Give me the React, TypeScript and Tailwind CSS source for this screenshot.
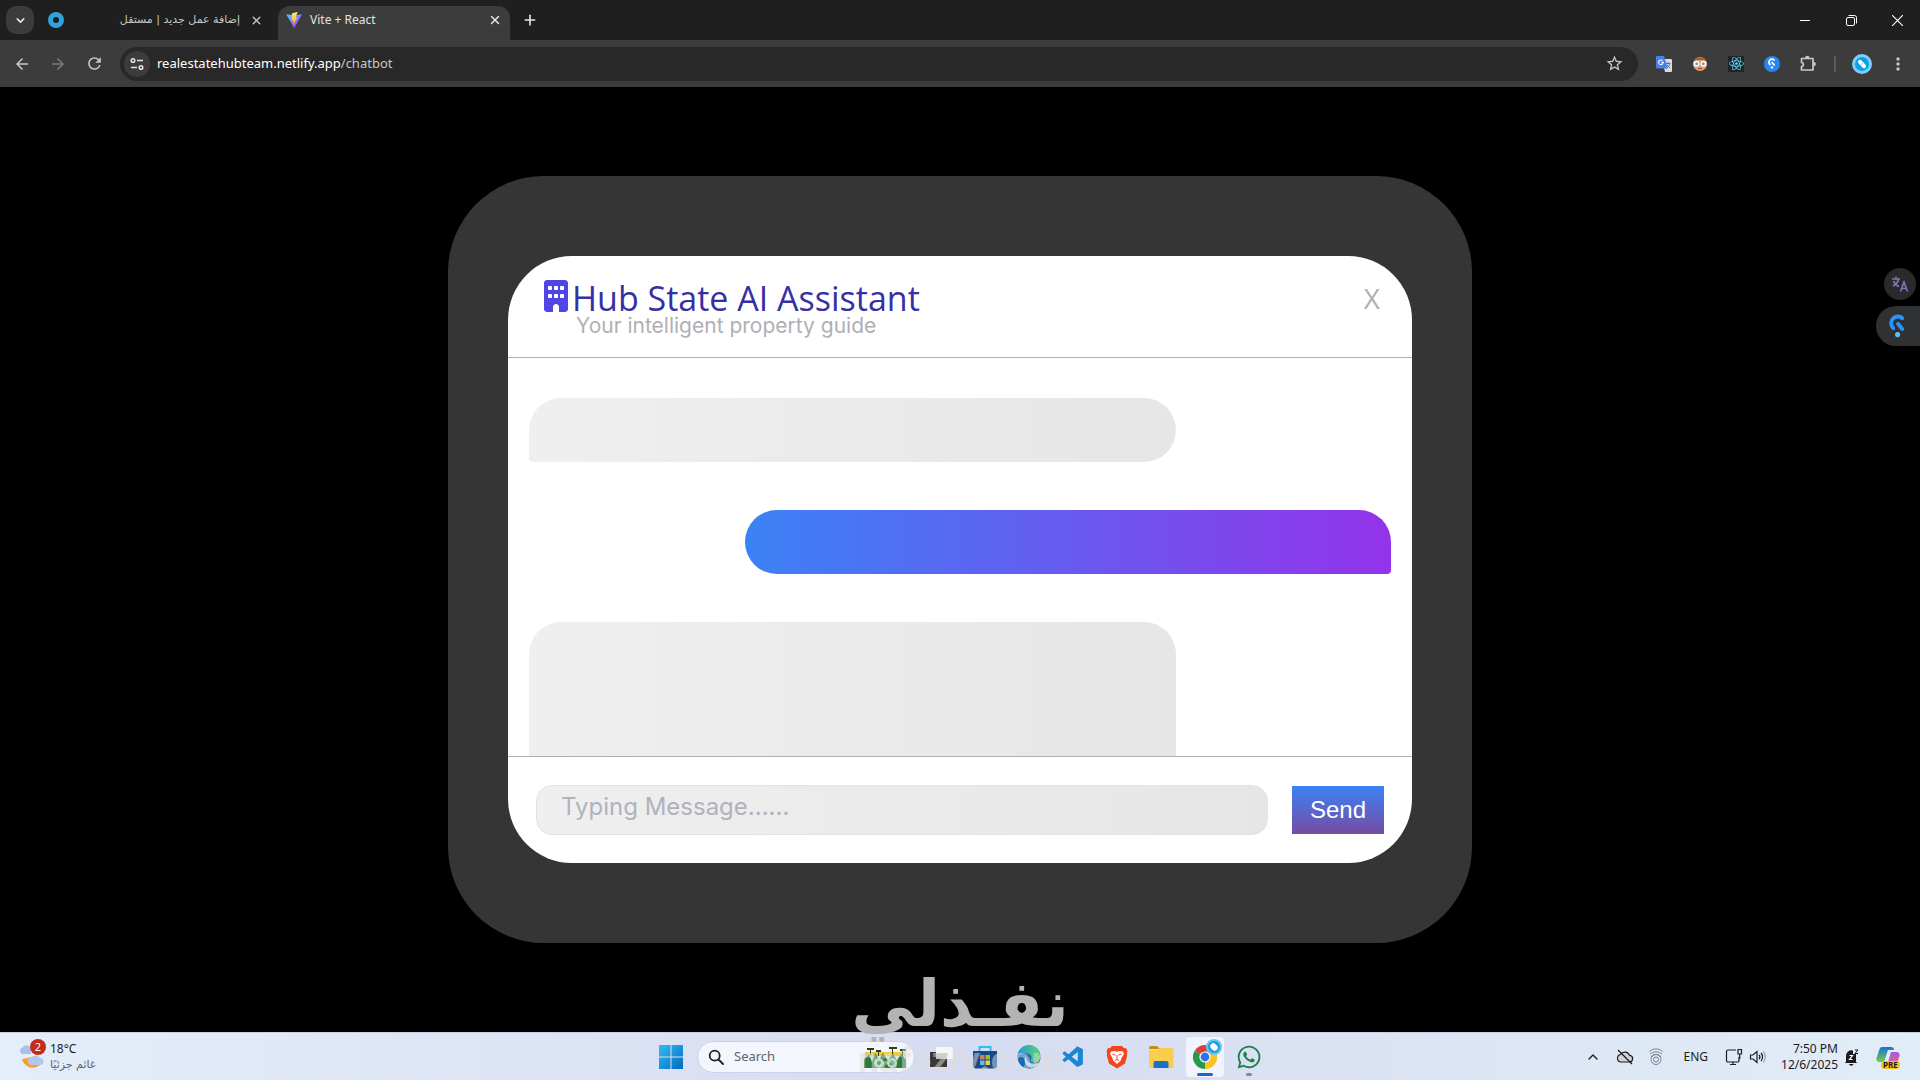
import type { ReactNode } from "react";
import { FaBuilding } from "react-icons/fa6";
import { FaWhatsapp, FaReact } from "react-icons/fa";
import { VscVscode } from "react-icons/vsc";
import { MdTranslate, MdStarBorder, MdRefresh, MdArrowBack, MdArrowForward, MdMoreVert } from "react-icons/md";
import { ChevronDown, ChevronUp, Plus, X } from "lucide-react";

const UI = "font-['Noto_Sans','Open_Sans','DejaVu_Sans',sans-serif]";

function ViteLogo() {
  return (
    <svg viewBox="0 0 32 32" className="size-4 shrink-0" aria-hidden="true">
      <defs>
        <linearGradient id="viteA" x1="0" y1="0" x2="0.7" y2="1">
          <stop offset="0" stopColor="#41d1ff" />
          <stop offset="1" stopColor="#bd34fe" />
        </linearGradient>
        <linearGradient id="viteB" x1="0.5" y1="0" x2="0.5" y2="1">
          <stop offset="0" stopColor="#ffea83" />
          <stop offset="1" stopColor="#ffa800" />
        </linearGradient>
      </defs>
      <path d="M31.3 5.6 17 31a.8.8 0 0 1-1.4 0L.9 5.6A.8.8 0 0 1 1.700 4.500L16 7 30.500 4.500a.8.8 0 0 1 .8 1.100z" fill="url(#viteA)" />
      <path d="M22.700.2 12.200 2.300l-.4.400-.7 14 .5.400 3-.7-1 4.500 2.300-.4-1.200 5.500 7.700-14.700-3.400.4L23 .8z" fill="url(#viteB)" />
    </svg>
  );
}

function Tabs() {
  return (
    <header className="flex h-10 bg-[#1f1f1f] text-[#e3e3e3]">
      <div className="flex w-[278px] items-center pl-1.5">
        <button aria-label="Search tabs" className="flex size-7 items-center justify-center rounded-[10px] bg-[#3c3c3c]">
          <ChevronDown size={13} strokeWidth={3} />
        </button>
        <span className="ml-3.5 size-4 shrink-0 rounded-full border-[5px] border-[#2ea3dc]" />
        <span dir="rtl" className="ml-auto whitespace-nowrap text-[11px] text-[#c7c7c7] font-['DejaVu_Sans',sans-serif]">إضافة عمل جديد | مستقل</span>
        <button aria-label="Close tab" className="mr-[15px] ml-2.5 text-[#c7c7c7]"><X size={13} strokeWidth={2.500} /></button>
      </div>
      <div className="flex h-[34px] w-[232px] items-center self-end rounded-t-xl bg-[#3c3c3c] px-2 pb-1.5">
        <ViteLogo />
        <span className="ml-2 text-xs">Vite + React</span>
        <button aria-label="Close tab" className="ml-auto"><X size={14} strokeWidth={2.500} /></button>
      </div>
      <button aria-label="New tab" className="ml-2.5 px-0.5"><Plus size={16} strokeWidth={2.500} /></button>
      <div className="ml-auto flex text-white">
        <button aria-label="Minimize" className="flex w-[46px] items-center justify-center">
          <svg viewBox="0 0 10 10" className="size-2.5" stroke="currentColor"><path d="M0 5.500h10" /></svg>
        </button>
        <button aria-label="Restore" className="flex w-[46px] items-center justify-center">
          <svg viewBox="0 0 11 11" className="size-[11px]" fill="none" stroke="currentColor"><rect x=".5" y="2.500" width="8" height="8" rx="1.500" /><path d="M2.500.5h6a2 2 0 0 1 2 2v6" /></svg>
        </button>
        <button aria-label="Close" className="flex w-[46px] items-center justify-center">
          <svg viewBox="0 0 10 10" className="size-[11px]" stroke="currentColor"><path d="M0 0l10 10M10 0L0 10" /></svg>
        </button>
      </div>
    </header>
  );
}

function HubMark({ className, main, dot }: { className: string; main: string; dot: string }) {
  return (
    <svg viewBox="0 0 20 28" className={className} aria-hidden="true" fill="none">
      <path d="M15.500 5A6.800 6.800 0 1 0 5 16.500" stroke={main} strokeWidth="4.500" strokeLinecap="round" />
      <path d="M10.500 11.500 15.500 17.500" stroke={main} strokeWidth="4.500" strokeLinecap="round" />
      <circle cx="10" cy="24" r="3" fill={dot} />
    </svg>
  );
}

function Toolbar() {
  return (
    <nav className="flex h-[47px] items-center bg-[#3c3c3c] text-[#c7c7c7]">
      <button aria-label="Back" className="ml-1 flex w-9 justify-center"><MdArrowBack size={18} /></button>
      <button aria-label="Forward" className="flex w-9 justify-center text-[#7b7b7b]"><MdArrowForward size={18} /></button>
      <button aria-label="Reload" className="flex w-9 justify-center"><MdRefresh size={19} /></button>
      <div className="ml-2 flex h-[34px] flex-1 items-center rounded-full bg-[#282828] pl-1 pr-3.5">
        <button aria-label="Site information" className="flex size-[26px] items-center justify-center rounded-full bg-[#3c3c3c]">
          <svg viewBox="0 0 14 14" className="size-3.5" fill="none" stroke="#e3e3e3" strokeWidth="1.500"><circle cx="3" cy="3.500" r="1.800" /><path d="M7 3.500h6M1 10.500h6" /><circle cx="11" cy="10.500" r="1.800" /></svg>
        </button>
        <div role="textbox" aria-label="Address" contentEditable suppressContentEditableWarning className="ml-[7px] flex-1 text-[13px] text-white outline-none">
          realestatehubteam.netlify.app<span className="text-[#c7c7c7]">/chatbot</span>
        </div>
        <button aria-label="Bookmark"><MdStarBorder size={19} /></button>
      </div>
      <div className="ml-2 flex items-center">
        <button aria-label="Translate" className="flex w-9 justify-center">
          <svg viewBox="0 0 16 16" className="size-4"><path d="M6 3h9a1 1 0 0 1 1 1v11a1 1 0 0 1-1 1H9z" fill="#d9dce0" /><path d="M9.500 7.500h5M12 6v1.500M14 7.500c-.5 2-2 3.500-3.500 4.500M11 9l3 3" stroke="#697077" fill="none" /><path d="M0 1a1 1 0 0 1 1-1h7l4 12.500H1a1 1 0 0 1-1-1z" fill="#4a80ee" /><path d="M6.500 4.600A2.300 2.300 0 1 0 7.200 6.300H5" stroke="#fff" fill="none" strokeWidth="1.100" /></svg>
        </button>
        <button aria-label="Face extension" className="flex w-9 justify-center">
          <svg viewBox="0 0 16 16" className="size-4"><circle cx="8" cy="8" r="7" fill="#dc9e75" /><path d="M1.500 6C2 0 14 0 14.500 6L12 4H4z" fill="#9b6235" /><circle cx="4.500" cy="7.800" r="3" fill="#fff" /><circle cx="11.500" cy="7.800" r="3" fill="#fff" /><circle cx="4.700" cy="7.800" r="1.500" fill="#7f9aa2" /><circle cx="11.300" cy="7.800" r="1.500" fill="#7f9aa2" /><path d="M6 12.500h4" stroke="#a94732" /></svg>
        </button>
        <button aria-label="React tools" className="flex w-9 justify-center"><span className="flex size-4 items-center justify-center bg-[#20232a] text-[#61dafb]"><FaReact size={15} /></span></button>
        <button aria-label="Hub extension" className="flex w-9 justify-center"><span className="flex size-4 items-center justify-center rounded-full bg-[#2487f5]"><HubMark className="h-[11px]" main="#fff" dot="#fff" /></span></button>
        <button aria-label="Extensions" className="flex w-9 justify-center">
          <svg viewBox="0 0 18 18" className="size-[18px]" fill="none" stroke="#c7c7c7" strokeWidth="1.700" strokeLinejoin="round"><path d="M2.500 3.500h11.500v11.500H2.500v-3.500c2.500 0 2.500-4 0-4z" /><path d="M7 3a1.300 1.300 0 0 1 2.600 0M14.500 7.500a1.500 1.500 0 0 1 0 3" fill="#c7c7c7" /></svg>
        </button>
        <span className="ml-2 h-4 w-0.5 bg-[#5b5b5b]" />
        <button aria-label="Profile" className="ml-4 flex size-5 items-center justify-center rounded-full bg-[#7fd0f7]">
          <svg viewBox="0 0 16 16" className="size-4"><circle cx="8" cy="8" r="7" fill="#08a2e8" /><path d="M6 5.800 10 10.200" stroke="#fff" strokeWidth="4" strokeLinecap="round" /><path d="M6.500 9.500 9.500 6.500" stroke="#8fd3f7" strokeWidth="1" /></svg>
        </button>
        <button aria-label="Menu" className="ml-4 mr-3"><MdMoreVert size={20} /></button>
      </div>
    </nav>
  );
}

function ChatCard() {
  return (
    <section className="w-full max-w-[1024px] rounded-[96px] bg-[#353535] px-[60px] py-20">
      <div className="flex flex-col overflow-hidden rounded-[64px] bg-white">
        <div className="flex h-[102px] items-start border-b border-[#b0b0b0] px-9 pt-6">
          <FaBuilding className="h-8 w-6 text-[#4f46e5]" />
          <div className="ml-1 pt-0.5">
            <h1 className="text-[34px] leading-8 text-[#3730a3] font-['Open_Sans',sans-serif]">Hub State AI Assistant</h1>
            <p className="ml-1 text-[21px] leading-6 text-[#b0b0b4] font-[Inter,sans-serif]">Your intelligent property guide</p>
          </div>
          <button aria-label="Close chat" className="-mr-1 ml-auto text-[28px] font-medium leading-9 text-[#b0b0b0] font-['Open_Sans',sans-serif]">X</button>
        </div>
        <div className="flex h-[398px] flex-col gap-12 overflow-hidden px-[21px] pt-10">
          <div className="h-16 w-3/4 shrink-0 rounded-[32px] rounded-bl-[4px] bg-linear-to-r/srgb from-[#efefef] to-[#e6e6e6]" />
          <div className="h-16 w-3/4 shrink-0 self-end rounded-[32px] rounded-br-[4px] bg-linear-to-r/srgb from-[#3b82f6] to-[#9333ea]" />
          <div className="h-44 w-3/4 shrink-0 rounded-[32px] rounded-bl-[4px] bg-linear-to-r/srgb from-[#efefef] to-[#e6e6e6]" />
        </div>
        <form className="flex h-[107px] items-center gap-6 border-t border-[#b0b0b0] px-7" onSubmit={(e) => e.preventDefault()}>
          <input aria-label="Message" placeholder="Typing Message......" className="h-[50px] min-w-0 flex-1 rounded-2xl border border-[#e3e3e3] bg-linear-to-r/srgb from-[#efefef] to-[#e6e6e6] px-6 pb-2 text-2xl font-[Inter,sans-serif] placeholder:text-[#b0b2bd]" />
          <button className="h-12 bg-linear-to-b/srgb from-[#3b82f6] to-[#764ba2] px-[18px] text-2xl text-white font-['Liberation_Sans',sans-serif]">Send</button>
        </form>
      </div>
    </section>
  );
}

function TaskButton({ label, children }: { label: string; children: ReactNode }) {
  return <button aria-label={label} className="relative flex h-12 w-11 items-center justify-center">{children}</button>;
}

function ChromeLogo() {
  return (
    <svg viewBox="0 0 24 24" className="size-6" aria-hidden="true">
      <path d="M12 12 1.600 6A12 12 0 0 1 22.400 6z" fill="#de4033" />
      <path d="M12 12 22.400 6A12 12 0 0 1 12 24z" fill="#fcc31e" />
      <path d="M12 12 12 24A12 12 0 0 1 1.600 6z" fill="#26994a" />
      <path d="M12 6.500h10.600A12 12 0 0 1 12 24l4.800-8.800z" fill="#fcc31e" />
      <circle cx="12" cy="12" r="5.600" fill="#fff" />
      <circle cx="12" cy="12" r="4.400" fill="#2f74e6" />
    </svg>
  );
}

function Taskbar() {
  return (
    <footer className="grid h-12 grid-cols-[1fr_auto_1fr] border-t border-[#c9cfdd] bg-linear-to-r from-[#e4eefa] via-[#d6dcf1] to-[#e1edf7] text-xs text-[#1b1b1f]">
      <div className="flex items-center pl-[18px]">
        <div className="relative h-7 w-8">
          <svg viewBox="0 0 32 28" className="h-7 w-8" aria-hidden="true">
            <path d="M4 16a11 11 0 0 0 18 6l-2-9z" fill="#f5a12c" />
            <path d="M4 11a3.500 3.500 0 0 1 .5-6.500A5 5 0 0 1 13 5v6z" fill="#aabfe9" />
            <path d="M14 22a4 4 0 0 1 0-8 5 5 0 0 1 8 1 3.500 3.500 0 0 1 0 7z" fill="#b5c5ec" />
          </svg>
          <span className="absolute -top-1 left-3 flex size-4 items-center justify-center rounded-full bg-[#c42b1c] text-[11px] text-white">2</span>
        </div>
        <div className="leading-4">
          <div>18°C</div>
          <div dir="rtl" className="text-[11px] text-[#5b5f68] font-['DejaVu_Sans',sans-serif]">غائم جزئيًا</div>
        </div>
      </div>

      <div className="flex items-center">
        <TaskButton label="Start">
          <svg viewBox="0 0 24 24" className="size-6">
            <defs><linearGradient id="win" x1="0" y1="0" x2="1" y2="1"><stop offset="0" stopColor="#33bdf2" /><stop offset="1" stopColor="#0568c2" /></linearGradient></defs>
            <path d="M0 0h11.500v11.500H0zM12.500 0H24v11.500H12.500zM0 12.500h11.500V24H0zM12.500 12.500H24V24H12.500z" fill="url(#win)" />
          </svg>
        </TaskButton>
        <div className="mx-1 flex h-8 w-[218px] items-center rounded-full border border-[#c9d2e8] bg-[#f3f6fd] pl-2.5 pr-1">
          <svg viewBox="0 0 16 16" className="size-4 shrink-0" fill="none" stroke="#1f1f24" strokeWidth="1.800" strokeLinecap="round"><circle cx="6.700" cy="6.700" r="5" /><path d="M10.500 10.500 15 15" /></svg>
          <input aria-label="Search" placeholder="Search" className="ml-2.5 w-24 flex-1 text-[13px] outline-none placeholder:text-[#60636c]" />
          <svg viewBox="0 0 48 26" className="h-[26px] w-12 shrink-0" aria-hidden="true">
            <path d="M2 10h42v14H2z" fill="#dce8d8" />
            <path d="M3 8h40v4H3z" fill="#f2c931" />
            <path d="M2 24V15l5-5 3 8 3-9 4 7 4-7 5 8 5-8 4 8 4-8 5 7v8z" fill="#2b7a3c" />
            <path d="M5 4h7v2H5zM14 6h5v2h-5zM27 3h8v2h-8zM38 5h6v2h-6zM8 5h1v6H8zM16 7h1v5h-1zM30 4h1v7h-1zM40 6h1v6h-1z" fill="#2c3d1c" />
            <circle cx="17" cy="19" r="5" fill="#b9dfc8" /><circle cx="30" cy="19" r="5" fill="#a7e0c2" />
            <circle cx="30" cy="19" r="2.500" fill="#2f9060" /><circle cx="17" cy="19" r="2" fill="#58a878" />
          </svg>
        </div>
        <TaskButton label="Task view">
          <svg viewBox="0 0 24 24" className="size-6"><path d="M1 7h17v15H1z" fill="#38383b" /><path d="M7 2h17v12H7z" fill="#f7f7f8" /><path d="M7 8h11v6H7z" fill="#c4c4c6" /></svg>
        </TaskButton>
        <TaskButton label="Store">
          <svg viewBox="0 0 24 24" className="size-6"><path d="M6.500 6V2h11v4" stroke="#30bdf2" strokeWidth="2" fill="none" /><path d="M0 6h24v14.500a3 3 0 0 1-3 3H3a3 3 0 0 1-3-3z" fill="#174a84" /><path d="M7 10h4.500v4.500H7z" fill="#d97a68" /><path d="M12.500 10H17v4.500h-4.500z" fill="#99bf31" /><path d="M7 15.500h4.500V20H7z" fill="#6eb7ea" /><path d="M12.500 15.500H17V20h-4.500z" fill="#f8cb3c" /></svg>
        </TaskButton>
        <TaskButton label="Edge">
          <svg viewBox="0 0 24 24" className="size-6">
            <defs><linearGradient id="edge"><stop offset="0" stopColor="#219bdc" /><stop offset="1" stopColor="#60d46a" /></linearGradient></defs>
            <circle cx="12" cy="12" r="11.500" fill="#1469b8" />
            <path d="M.5 11A11.500 11.500 0 0 1 23.500 12c0 4-3 5.500-6 5.500-3.500 0-4.500-1.500-3.500-3 1.500-3-1-6-5-6-4 0-7 1-8.500 2.500z" fill="url(#edge)" />
            <path d="M9 11c-3 4-1 10 5 12 4-1 6-2 8-5-6 2-13 0-13-7z" fill="#bdd5ec" />
          </svg>
        </TaskButton>
        <TaskButton label="Visual Studio Code"><VscVscode size={25} color="#1b86d1" /></TaskButton>
        <TaskButton label="Brave">
          <svg viewBox="0 0 24 24" className="size-6">
            <path d="M7 1h10l2 2.300 2-.3 1.500 3.500-.7 2 .4 2-2.200 8L12 23.500 4 18.500l-2.200-8 .4-2-.7-2L3 3l2 .3z" fill="#f4431f" />
            <path d="M6 6.500 9.500 6 12 6.700 14.500 6 18 6.500 19 9l-2.500 4-.7 2.500L12 19l-3.800-3.500L7.500 13 5 9z" fill="#fff" />
            <path d="M7.500 9.500 10.500 10M16.500 9.500 13.500 10M12 10v4M10 15.500l2-1 2 1" stroke="#f4431f" fill="none" />
          </svg>
        </TaskButton>
        <TaskButton label="File Explorer">
          <svg viewBox="0 0 26 24" className="h-6 w-[26px]"><path d="M1 3a2 2 0 0 1 2-2h6l3 3H1z" fill="#c98d11" /><path d="M1 6a1 1 0 0 1 1-1h8l2-2h12a1.500 1.500 0 0 1 1.500 1.500V21a2 2 0 0 1-2 2H3a2 2 0 0 1-2-2z" fill="#f9ce4c" /><path d="M5.500 23v-5a2 2 0 0 1 2-2h11a2 2 0 0 1 2 2v5z" fill="#1972be" /></svg>
        </TaskButton>
        <TaskButton label="Chrome">
          <span className="absolute inset-x-[3px] inset-y-1 rounded bg-[#f1f4fc]" />
          <span className="relative"><ChromeLogo /></span>
          <span className="absolute left-[23px] top-1.5 flex size-4 items-center justify-center rounded-full border-2 border-[#6cc4f0] bg-[#199fe4]"><span className="h-2 w-1.5 -rotate-45 rounded-full bg-white" /></span>
          <span className="absolute bottom-[5px] h-[3px] w-4 rounded-full bg-[#1769c7]" />
        </TaskButton>
        <TaskButton label="WhatsApp">
          <FaWhatsapp size={26} color="#1e8051" />
          <span className="absolute bottom-[5px] h-[3px] w-1.5 rounded-full bg-[#85889a]" />
        </TaskButton>
      </div>

      <div className="flex items-center justify-end pr-5">
        <button aria-label="Show hidden icons"><ChevronUp size={16} /></button>
        <svg viewBox="0 0 18 16" className="ml-[15px] h-4 w-[18px]" fill="#cfd3d8" stroke="#1b1b1f" strokeWidth="1.200"><path d="M5 13a3.800 3.800 0 0 1-.5-7.500 5 5 0 0 1 9 .8A3.300 3.300 0 0 1 13 13z" /><path d="M2 1l14 14" /></svg>
        <svg viewBox="0 0 16 18" className="ml-3.5 h-[18px] w-4" fill="none" stroke="#788093"><circle cx="8" cy="11.500" r="2.500" /><circle cx="8" cy="11.500" r="5" /><path d="M2 6.500c3-3.500 9-3.500 12 0M1.500 3.500c4-3.500 9-3.500 13 0M3 9c2-3.500 8-3.500 10 0" /></svg>
        <span className="ml-[19px]">ENG</span>
        <svg viewBox="0 0 18 18" className="ml-[17px] size-[18px]" fill="none" stroke="#1b1b1f" strokeWidth="1.200"><path d="M11 2H3a1.500 1.500 0 0 0-1.500 1.500v9A1.500 1.500 0 0 0 3 14h9.500a1.500 1.500 0 0 0 1.500-1.500V9M5 16.500h6M8 14v2.500" /><path d="M13 1.500h3.500v4.500H13zM14.700 6v5" /></svg>
        <svg viewBox="0 0 18 16" className="ml-1.5 h-4 w-[18px]" fill="none" stroke="#1b1b1f" strokeWidth="1.200"><path d="M1.500 6H4l4-3.500v11L4 10H1.500zM10 5.800c1 1.200 1 3.200 0 4.400M12 4c2 2.200 2 5.800 0 8" /><path d="M14.200 2.500c2.800 3 2.800 8 0 11" stroke="#9aa0a8" /></svg>
        <div className="ml-3.5 text-right leading-4">
          <div>7:50 PM</div>
          <div>12/6/2025</div>
        </div>
        <svg viewBox="0 0 16 18" className="ml-1.5 h-[18px] w-4" fill="#1b1b1f"><path d="M2 14V8a5.500 5.500 0 0 1 7-5.500V6h3v8l1.500 1H.5zM5 16h4.500a2.300 2.300 0 0 1-4.500 0z" /><path d="M11 2h3l-3 3.500h3" stroke="#1b1b1f" fill="none" /><path d="M5.500 7.500h3l-3 4h3" stroke="#fff" fill="none" strokeWidth="1.200" /></svg>
        <button aria-label="Copilot" className="relative ml-4">
          <svg viewBox="0 0 24 24" className="size-6">
            <defs><linearGradient id="copA" x1="0" y1="0" x2="0" y2="1"><stop offset="0" stopColor="#1a72dc" /><stop offset="1" stopColor="#72cc48" /></linearGradient><linearGradient id="copB" x1="0" y1="0" x2="0" y2="1"><stop offset="0" stopColor="#a35ae3" /><stop offset="1" stopColor="#f36a70" /></linearGradient></defs>
            <path d="M6 2h9a3 3 0 0 1 3 3H12L8 17H3a3 3 0 0 1-2.500-4L3.500 4A3 3 0 0 1 6 2z" fill="url(#copA)" />
            <path d="M15 7h6a3 3 0 0 1 2.500 4l-2.500 8a3 3 0 0 1-3 2H8l4-4z" fill="url(#copB)" />
          </svg>
          <span className="absolute bottom-0 left-[5px] rounded-sm bg-[#f5c11d] px-0.5 text-[8px] font-bold leading-[8px]">PRE</span>
        </button>
      </div>
    </footer>
  );
}

export default function App() {
  return (
    <div className={`relative flex min-h-screen flex-col bg-black ${UI}`}>
      <Tabs />
      <Toolbar />
      <main className="flex flex-1 items-center justify-center">
        <ChatCard />
      </main>
      <Taskbar />
      <aside className="absolute right-0 top-[268px] flex flex-col items-end gap-1.5">
        <button aria-label="Translate page" className="mr-1 flex size-8 items-center justify-center rounded-full bg-[#2a2a2c] text-[#8177b8]"><MdTranslate size={17} className="-scale-x-100 hidden" /><svg viewBox="0 0 18 18" className="size-[18px]" fill="none" stroke="currentColor" strokeWidth="1.600"><path d="M1 4h8M5 1.500V4M2 11c3-1.500 5-4 5.500-7M2.500 6c1 2.500 3 4.500 5.500 5.500M9.500 16.500l3.500-9.500 3.500 9.500M10.800 13.500h4.500" /></svg></button>
        <button aria-label="Open helper" className="flex h-10 w-11 items-center justify-center rounded-l-[20px] bg-[#303132]"><HubMark className="h-6" main="#2a93f8" dot="#5bc0ee" /></button>
      </aside>
      <div className="pointer-events-none absolute inset-x-0 bottom-0 flex flex-col items-center">
        <div dir="rtl" className="text-[64px] font-bold leading-[72px] text-[#b3b3b3] font-['DejaVu_Sans',sans-serif]">نفـذلي</div>
        <div className="text-[34px] font-bold leading-10 text-[#dcdcd8]/50 font-[Inter,sans-serif]">nafezly.com</div>
      </div>
    </div>
  );
}
